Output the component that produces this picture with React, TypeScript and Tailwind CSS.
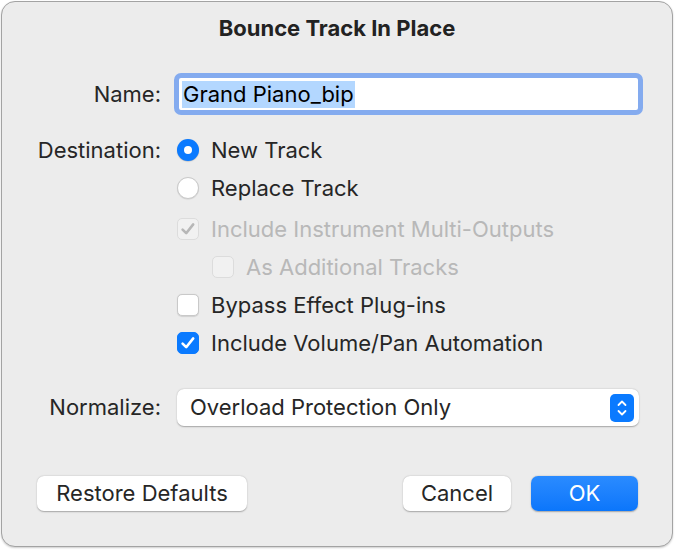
import React from 'react';

function Radio({ checked }: { checked?: boolean }) {
  if (checked) {
    return (
      <span className="flex h-[22px] w-[22px] items-center justify-center rounded-full bg-[#0a7aff] shadow-[0_0.5px_1px_rgba(0,0,0,0.25)]">
        <span className="h-[8px] w-[8px] rounded-full bg-white" />
      </span>
    );
  }
  return (
    <span className="block h-[22px] w-[22px] rounded-full border border-[#c9c9c9] bg-white shadow-[0_0.5px_1px_rgba(0,0,0,0.12)]" />
  );
}

function Check({ checked, disabled }: { checked?: boolean; disabled?: boolean }) {
  const box = disabled
    ? 'border-[#dcdcdc] bg-[#f1f1f1]'
    : checked
      ? 'border-[#0a7aff] bg-[#0a7aff]'
      : 'border-[#c9c9c9] bg-white shadow-[0_0.5px_1px_rgba(0,0,0,0.12)]';
  return (
    <span className={`flex h-[22px] w-[22px] items-center justify-center rounded-[5px] border ${box}`}>
      {checked && (
        <svg width="18" height="18" viewBox="0 0 18 18" fill="none">
          <path
            d="M3.6 9.6 L7.2 13.2 L14.2 4.4"
            stroke={disabled ? '#b7b7b7' : '#ffffff'}
            strokeWidth="2.6"
            strokeLinecap="round"
            strokeLinejoin="round"
          />
        </svg>
      )}
    </span>
  );
}

function Option({
  control,
  label,
  disabled,
  indent,
}: {
  control: React.ReactNode;
  label: string;
  disabled?: boolean;
  indent?: boolean;
}) {
  return (
    <div className={`flex h-[38px] items-center gap-[12px] ${indent ? 'pl-[35px]' : ''}`}>
      {control}
      <span className={disabled ? 'text-[#b8b8b8]' : 'text-[#262626]'}>{label}</span>
    </div>
  );
}

export default function App() {
  return (
    <div className="min-h-[552px] bg-white p-px" style={{ fontFamily: 'Inter, "Noto Sans", sans-serif' }}>
      <div className="flex h-[546px] w-[672px] flex-col rounded-[14px] border border-[#a3a3a3] bg-[#ececec] text-[22px] text-[#262626] shadow-[0_1px_2px_rgba(0,0,0,0.2)]">
        <div className="flex h-[52px] items-center justify-center text-[22px] font-bold text-[#222]">
          Bounce Track In Place
        </div>

        <div className="mt-[19px] flex items-center">
          <div className="w-[159px] text-right">Name:</div>
          <div className="ml-[13px] flex h-[42px] w-[469px] items-center rounded-[7px] border-[5px] border-[#84abef] bg-white pl-[3px]">
            <span className="bg-[#b3d7ff] px-[1px] leading-[27px] text-black">Grand Piano_bip</span>
          </div>
        </div>

        <div className="mt-[16px] flex">
          <div className="flex h-[38px] w-[159px] items-center justify-end">Destination:</div>
          <div className="ml-[16px] flex flex-col">
            <Option control={<Radio checked />} label="New Track" />
            <Option control={<Radio />} label="Replace Track" />
            <div className="h-[3px]" />
            <Option control={<Check checked disabled />} label="Include Instrument Multi-Outputs" disabled />
            <Option control={<Check disabled />} label="As Additional Tracks" disabled indent />
            <Option control={<Check />} label="Bypass Effect Plug-ins" />
            <Option control={<Check checked />} label="Include Volume/Pan Automation" />
          </div>
        </div>

        <div className="mt-[27px] flex items-center">
          <div className="w-[159px] text-right">Normalize:</div>
          <div className="ml-[16px] flex h-[37px] w-[462px] items-center justify-between rounded-[7px] bg-white pl-[13px] pr-[5px] shadow-[0_0.5px_1.5px_rgba(0,0,0,0.3)]">
            <span>Overload Protection Only</span>
            <span className="flex h-[28px] w-[24px] items-center justify-center rounded-[5px] bg-[#0a7aff]">
              <svg width="12" height="20" viewBox="0 0 12 20" fill="none">
                <path d="M2.5 7 L6 3.5 L9.5 7" stroke="white" strokeWidth="1.8" strokeLinecap="round" strokeLinejoin="round" />
                <path d="M2.5 13 L6 16.5 L9.5 13" stroke="white" strokeWidth="1.8" strokeLinecap="round" strokeLinejoin="round" />
              </svg>
            </span>
          </div>
        </div>

        <div className="mt-[50px] flex items-center pl-[35px] pr-[34px]">
          <button className="h-[35px] w-[210px] rounded-[7px] bg-white text-[#262626] shadow-[0_0.5px_1.5px_rgba(0,0,0,0.3)]">
            Restore Defaults
          </button>
          <div className="flex-1" />
          <button className="h-[35px] w-[108px] rounded-[7px] bg-white text-[#262626] shadow-[0_0.5px_1.5px_rgba(0,0,0,0.3)]">
            Cancel
          </button>
          <button className="ml-[20px] h-[35px] w-[107px] rounded-[7px] bg-gradient-to-b from-[#2a8bff] to-[#0a76fb] text-white shadow-[0_0.5px_1.5px_rgba(0,0,0,0.3)]">
            OK
          </button>
        </div>
      </div>
    </div>
  );
}
